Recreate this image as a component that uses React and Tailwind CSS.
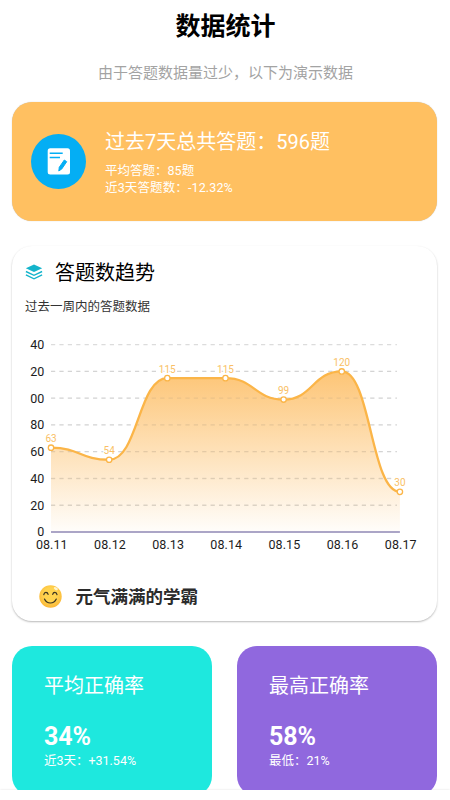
import React from 'react';

const days = [
  { label: '08.11', value: 63 },
  { label: '08.12', value: 54 },
  { label: '08.13', value: 115 },
  { label: '08.14', value: 115 },
  { label: '08.15', value: 99 },
  { label: '08.16', value: 120 },
  { label: '08.17', value: 30 },
];

const ticks = [
  { value: 0, label: '0' },
  { value: 20, label: '20' },
  { value: 40, label: '40' },
  { value: 60, label: '60' },
  { value: 80, label: '80' },
  { value: 100, label: '00' },
  { value: 120, label: '20' },
  { value: 140, label: '40' },
];

const BASE_Y = 203;
const LEFT_X = 39;
const STEP_X = 58.15;
const getX = (i) => LEFT_X + i * STEP_X;
const getY = (value) => BASE_Y - value * 1.338;

const TrendChart = () => {
  const points = days.map((d, i) => ({ ...d, x: getX(i), y: getY(d.value) }));
  const line = points
    .map((p, i) => {
      if (i === 0) return `M${p.x},${p.y}`;
      const prev = points[i - 1];
      const mid = (prev.x + p.x) / 2;
      return `C${mid},${prev.y} ${mid},${p.y} ${p.x},${p.y}`;
    })
    .join(' ');
  const endX = getX(days.length - 1);

  return (
    <svg className="block w-full h-[225px]" viewBox="0 0 425 225">
      <defs>
        <linearGradient id="trendFill" x1="0" y1="0" x2="0" y2="1">
          <stop offset="0" stopColor="#fdc576" />
          <stop offset="1" stopColor="#fdc576" stopOpacity="0.03" />
        </linearGradient>
      </defs>

      {/* Grid and y axis */}
      {ticks.map((t) => (
        <g key={t.value}>
          {t.value > 0 && (
            <line
              x1={LEFT_X}
              x2={endX - 3}
              y1={getY(t.value)}
              y2={getY(t.value)}
              stroke="#dcdcdc"
              strokeWidth="1.3"
              strokeDasharray="4.2 4.2"
            />
          )}
          <text x="32.4" y={getY(t.value) + 4.3} textAnchor="end" fontSize="12.5" fill="#1c1c1c">
            {t.label}
          </text>
        </g>
      ))}

      {/* Area and curve */}
      <path d={`${line} L${endX},${BASE_Y} L${LEFT_X},${BASE_Y} Z`} fill="url(#trendFill)" />
      {ticks.slice(1, 7).map((t) => (
        <line
          key={t.value}
          x1={LEFT_X}
          x2={endX - 3}
          y1={getY(t.value)}
          y2={getY(t.value)}
          stroke="#999999"
          strokeOpacity="0.12"
          strokeWidth="1.2"
          strokeDasharray="4.2 4.2"
        />
      ))}
      <line x1={LEFT_X} x2={endX} y1={BASE_Y} y2={BASE_Y} stroke="#8f87b5" strokeWidth="1.5" />
      <path d={line} fill="none" stroke="#fbb548" strokeWidth="2.3" />

      {/* Points with values and dates */}
      {points.map((p) => (
        <g key={p.label}>
          <circle cx={p.x} cy={p.y} r="2.7" fill="#fff" stroke="#fbb548" strokeWidth="1.3" />
          <text
            x={p.x}
            y={p.y - 5.5}
            textAnchor="middle"
            fontSize="10"
            fill="#f9bf66"
            stroke="#fff"
            strokeWidth="2"
            paintOrder="stroke"
          >
            {p.value}
          </text>
          <text x={p.x + 0.8} y="220" textAnchor="middle" fontSize="12.5" letterSpacing="0.08" fill="#1c1c1c">
            {p.label}
          </text>
        </g>
      ))}
    </svg>
  );
};

const NoteIcon = () => (
  <svg className="w-[55px] h-[55px] shrink-0" viewBox="0 0 55 55">
    <circle cx="27.5" cy="27.5" r="27.5" fill="#04aef4" />
    <rect x="16.7" y="14.3" width="22.3" height="26.2" rx="2.5" fill="#fff" />
    <path d="M18.7 19.2h13M18.7 23.5h10.3" stroke="#04aef4" strokeWidth="1.5" />
    <path d="M28.3 33.2l5-7.2 2.4 1.7-4.9 7.2-3 2.1z" fill="#04aef4" stroke="#04aef4" strokeWidth="1" strokeLinejoin="round" />
  </svg>
);

const LayersIcon = () => (
  <svg className="w-[18px] h-4" viewBox="0 0 18 16">
    <path d="M9 .5l8.2 3.7L9 7.9.8 4.2z" fill="#14b4cb" />
    <path d="M.9 7.5L9 11.3l8.1-3.8M.9 10.9L9 14.8l8.1-3.9" fill="none" stroke="#14b4cb" strokeWidth="1.4" />
  </svg>
);

const SmileIcon = () => (
  <svg className="w-[23px] h-[23px]" viewBox="0 0 23 23">
    <defs>
      <radialGradient id="face" cx="0.5" cy="0.42" r="0.6">
        <stop offset="0.5" stopColor="#ffd34f" />
        <stop offset="1" stopColor="#fbb535" />
      </radialGradient>
    </defs>
    <circle cx="11.5" cy="11.5" r="11.2" fill="url(#face)" />
    <ellipse cx="16.8" cy="3.6" rx="2.2" ry="1.3" fill="#fff3cd" transform="rotate(30 16.8 3.6)" />
    <g fill="none" stroke="#3c3420" strokeWidth="1.2" strokeLinecap="round">
      <path d="M4.8 9.6c.5-2.9 3.7-2.9 4.3-.2M13.7 9.4c.6-2.7 3.8-2.7 4.3.2" />
      <path d="M5.5 14c2.4 5.3 9.3 5.3 11.8 0" />
    </g>
  </svg>
);

const RateCard = ({ title, rate, note, color }) => (
  <div className={`flex-1 h-[150px] rounded-[20px] pl-[31.5px] text-white ${color}`}>
    <h3 className="pt-[26px] text-[20px] leading-7">{title}</h3>
    <p className="mt-[22px] text-[25px] leading-[30px] font-bold">{rate}</p>
    <p className="text-[12.5px] leading-[17px]">{note}</p>
  </div>
);

const App = () => {
  return (
    <div className="h-[800px] overflow-hidden bg-white text-black font-[Roboto,'Noto_Sans_CJK_SC',sans-serif]">
      <main className="h-[790px] overflow-hidden pl-[12.4px] pr-[12.6px]">
        <h1 className="pt-[9px] pl-[1px] text-center text-[25px] leading-9 font-bold">数据统计</h1>
        <p className="mt-[17px] pl-[1px] text-center text-[15px] leading-[22px] text-[#a3a3a3]">
          由于答题数据量过少，以下为演示数据
        </p>

        {/* Weekly summary */}
        <section className="mt-[18px] h-[118.5px] flex items-center pl-[18.7px] rounded-[20px] bg-[#ffc061] text-white shadow-[0_0_1px_#b8b8b8]">
          <NoteIcon />
          <div className="ml-[19px]">
            <h2 className="pt-px text-[20px] leading-7">过去7天总共答题：596题</h2>
            <p className="mt-[6px] text-[12.5px] leading-[17px]">平均答题：85题</p>
            <p className="text-[12.5px] leading-[17px] tracking-[0.01em]">近3天答题数：-12.32%</p>
          </div>
        </section>

        {/* Trend */}
        <section className="mt-[25.5px] h-[375px] rounded-[20px] bg-white shadow-[0_1px_2px_rgba(0,0,0,0.28)]">
          <div className="flex items-center pt-3 pl-[12.7px]">
            <LayersIcon />
            <h2 className="ml-3 pt-px -mb-px text-[20px] leading-7">答题数趋势</h2>
          </div>
          <p className="mt-3 mb-[14px] pl-[12.7px] text-[12.5px] leading-[17px] text-[#333]">过去一周内的答题数据</p>
          <TrendChart />
          <div className="flex items-center mt-[29px] pl-[26.6px]">
            <SmileIcon />
            <p className="ml-[13.5px] pt-px text-[17.5px] leading-[26px] font-bold text-[#2b2b2b]">元气满满的学霸</p>
          </div>
        </section>

        {/* Accuracy */}
        <section className="mt-[25px] flex gap-[25px]">
          <RateCard title="平均正确率" rate="34%" note="近3天：+31.54%" color="bg-[#1ee8de]" />
          <RateCard title="最高正确率" rate="58%" note="最低：21%" color="bg-[#9068de]" />
        </section>
      </main>
      <footer className="h-[10px] bg-white shadow-[0_0_2px_rgba(0,0,0,0.12)]" />
    </div>
  );
};

export default App;
